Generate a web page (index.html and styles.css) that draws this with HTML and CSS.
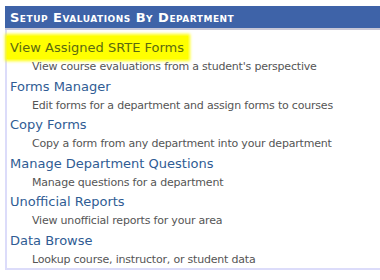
FILE: index.html
```html
<!DOCTYPE html>
<html lang="en">

<head>
    <meta charset="UTF-8">
    <title>Setup Evaluations By Department</title>
    <link rel="stylesheet" href="styles.css">
</head>

<body>
    <div class="panel">
        <div class="panel-header">Setup Evaluations By Department</div>

        <ul class="menu">
            <li class="menu-item current">
                <a href="#" class="menu-link">View Assigned SRTE Forms</a>
                <div class="menu-desc">View course evaluations from a student's perspective</div>
            </li>
            <li class="menu-item">
                <a href="#" class="menu-link">Forms Manager</a>
                <div class="menu-desc">Edit forms for a department and assign forms to courses</div>
            </li>
            <li class="menu-item">
                <a href="#" class="menu-link">Copy Forms</a>
                <div class="menu-desc">Copy a form from any department into your department</div>
            </li>
            <li class="menu-item">
                <a href="#" class="menu-link">Manage Department Questions</a>
                <div class="menu-desc">Manage questions for a department</div>
            </li>
            <li class="menu-item">
                <a href="#" class="menu-link">Unofficial Reports</a>
                <div class="menu-desc">View unofficial reports for your area</div>
            </li>
            <li class="menu-item">
                <a href="#" class="menu-link">Data Browse</a>
                <div class="menu-desc">Lookup course, instructor, or student data</div>
            </li>
        </ul>
    </div>
</body>

</html>
```

FILE: styles.css
```css
body {
    margin: 0;
    padding: 6px 0 0 5px;
    background-color: #fff;
    font-family: 'DejaVu Sans', Verdana, sans-serif;
    color: #444;
}

.panel {
    width: 380px;
    border-left: 2px solid #dcdcfa;
    border-bottom: 2px solid #dcdcfa;
}

.panel-header {
    height: 22px;
    line-height: 23px;
    padding-left: 5px;
    margin-left: -2px;
    background-color: #3e63a8;
    border-bottom: 2px solid #c7c7d6;
    color: #fff;
    font-weight: bold;
    font-size: 13px;
    font-variant: small-caps;
    letter-spacing: 0.5px;
}

.menu {
    list-style: none;
    margin: 0;
    padding: 6px 0 0 0;
}

.menu-item {
    height: 38.6px;
}

.menu-link {
    display: inline-block;
    padding: 3px 4px 2px 3px;
    font-size: 13px;
    line-height: 18px;
    color: #2f5c94;
    text-decoration: none;
}

.menu-desc {
    padding-left: 25px;
    font-size: 11px;
    line-height: 15px;
    letter-spacing: -0.2px;
    color: #555;
}

.current .menu-link {
    background-color: #ffff00;
    box-shadow: 0 0 3px 2px #ffff00;
    color: #5b6a10;
}
```
